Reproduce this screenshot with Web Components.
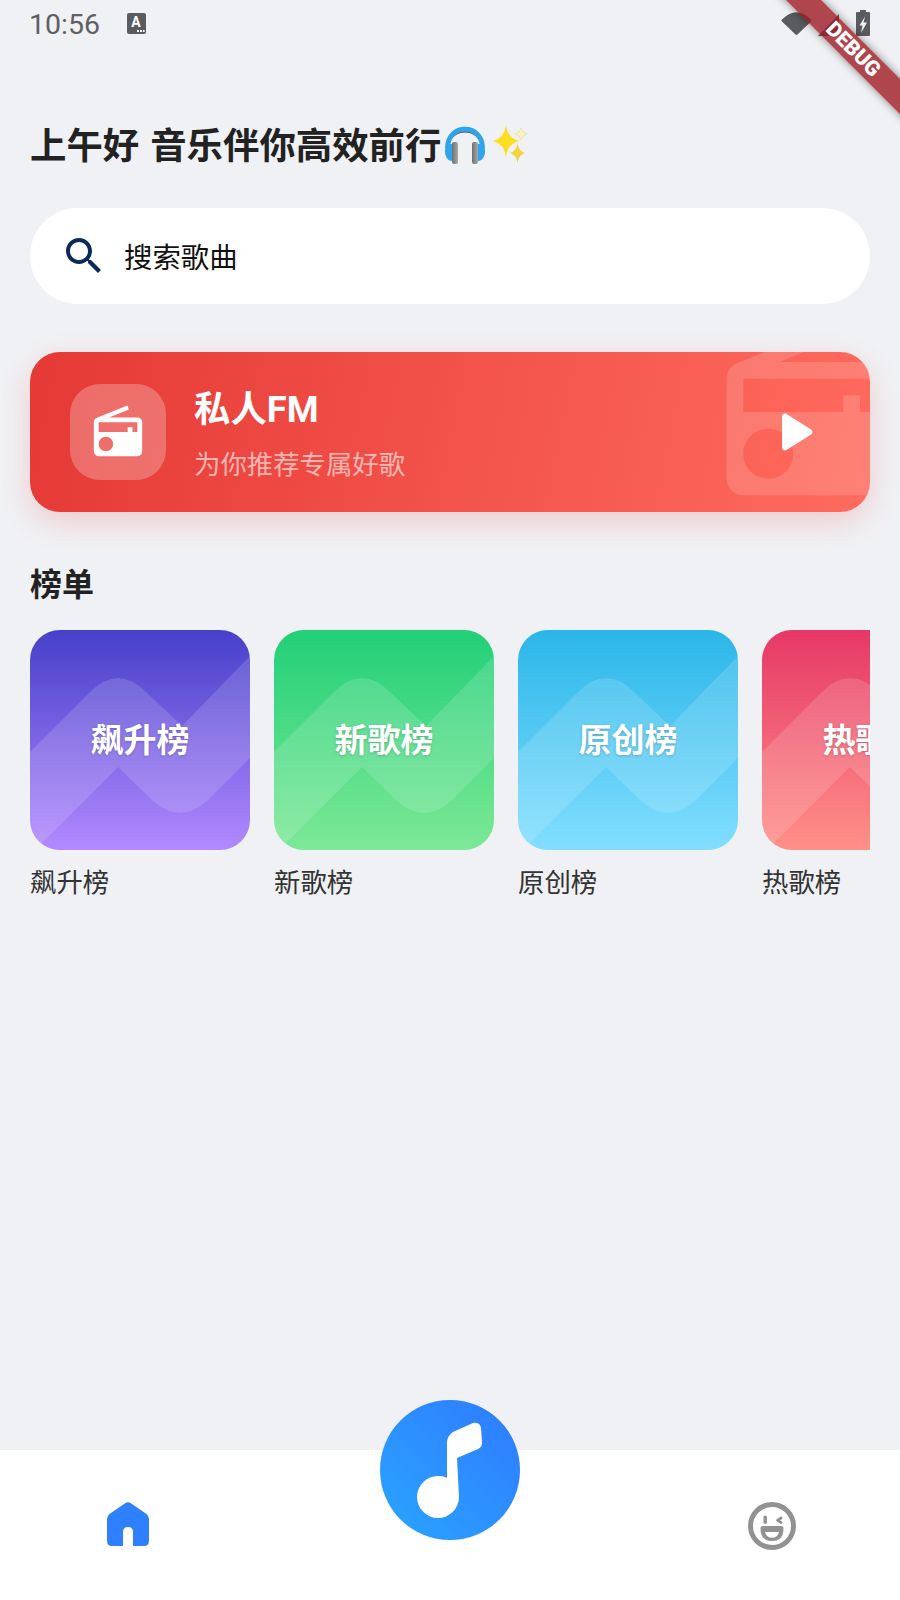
<!DOCTYPE html>
<html lang="zh">
<head>
<meta charset="utf-8">
<title>首页</title>
<style>
  html, body { margin: 0; padding: 0; }
  body {
    width: 900px;
    height: 1600px;
    overflow: hidden;
    background: #f0f1f4;
    font-family: Roboto, "Noto Sans CJK SC", sans-serif;
  }
</style>
</head>
<body>
<home-screen>
  <status-bar></status-bar>
  <greeting-title>上午好 音乐伴你高效前行</greeting-title>
  <search-box>搜索歌曲</search-box>
  <fm-card heading="私人FM" sub="为你推荐专属好歌"></fm-card>
  <section-title>榜单</section-title>
  <chart-row>
    <chart-card name="飙升榜" from="#4640c9" to="#b289ff"></chart-card>
    <chart-card name="新歌榜" from="#22cf78" to="#7de896"></chart-card>
    <chart-card name="原创榜" from="#2bb6e8" to="#82deff"></chart-card>
    <chart-card name="热歌榜" from="#e63866" to="#ff9088"></chart-card>
  </chart-row>
  <bottom-nav></bottom-nav>
</home-screen>
<debug-banner></debug-banner>

<script>
class HomeScreen extends HTMLElement {
  constructor() {
    super();
    this.attachShadow({ mode: "open" });
    this.shadowRoot.innerHTML = `
      <style>
        :host { display: flex; flex-direction: column; width: 900px; height: 1600px; }
      </style>
      <slot></slot>
    `;
  }
}

class StatusBar extends HTMLElement {
  constructor() {
    super();
    this.attachShadow({ mode: "open" });
    this.shadowRoot.innerHTML = `
      <style>
        :host { display: flex; align-items: flex-start; height: 50px; padding: 0 30px; color: #5f6063; }
        .time { font: 400 28.500px/50px Roboto, sans-serif; margin-left: -1px; }
        .kbd { margin: 13px 0 0 27px; }
        .wifi { margin: 12px 0 0 auto; }
        .signal { margin: 14px 0 0 6px; }
        .battery { margin: 10px 0 0 17px; }
        svg { display: block; flex: none; fill: #5a5b5e; }
      </style>
      <span class="time">10:56</span>
      <svg class="kbd" width="19" height="21" viewBox="0 0 19 21">
        <rect width="19" height="21" rx="2"/>
        <text x="9" y="14" text-anchor="middle" fill="#fff" font-family="Roboto, sans-serif" font-weight="700" font-size="14">A</text>
        <rect x="10" y="17" width="2" height="2" fill="#fff"/><rect x="13" y="17" width="2" height="2" fill="#fff"/><rect x="16" y="17" width="1.600" height="2" fill="#fff"/>
      </svg>
      <svg class="wifi" width="31" height="23" viewBox="0 0 31 23">
        <path d="M1 7.500Q15.500 -7 30 7.500Q31 8.500 30 9.500L16.500 22.500Q15.500 23.300 14.500 22.500L1 9.500Q0 8.500 1 7.500Z"/>
      </svg>
      <svg class="signal" width="21" height="22" viewBox="0 0 21 22"><path d="M21 0V22H0Z"/></svg>
      <svg class="battery" width="14" height="26" viewBox="0 0 14 26">
        <path d="M4 0H10V2H13Q14 2 14 3V25Q14 26 13 26H1Q0 26 0 25V3Q0 2 1 2H4Z"/>
        <path d="M9 6.500L3.500 15.500H6.500L5 23L11 12.500H7.500Z" fill="#f0f1f4"/>
      </svg>
    `;
  }
}

class GreetingTitle extends HTMLElement {
  constructor() {
    super();
    this.attachShadow({ mode: "open" });
    this.shadowRoot.innerHTML = `
      <style>
        :host { display: flex; align-items: center; height: 60px; margin: 63px 0 0 30px;
                font-size: 36.400px; font-weight: 700; color: #222; word-spacing: 2px; }
        svg { display: block; flex: none; margin-top: 2px; }
        .phones { margin-left: 3px; }
        .stars { margin-left: 7px; }
      </style>
      <slot></slot>
      <svg class="phones" width="42" height="40" viewBox="0 0 42 40">
        <defs>
          <linearGradient id="cup" x1="0" x2="1" y1="0" y2="0"><stop offset="0" stop-color="#6f6f6f"/><stop offset="1" stop-color="#a9a9a9"/></linearGradient>
        </defs>
        <path d="M4 24C4 2 38 2 38 24" fill="none" stroke="#3a4450" stroke-width="2"/>
        <path d="M3.500 24C3.500 -1 38.500 -1 38.500 24" fill="none" stroke="#2fa4ec" stroke-width="5"/>
        <path d="M1 27C1 22 4 20 8 20V37C4 37 1 33 1 27Z" fill="#2ea3ee"/>
        <path d="M41 27C41 22 38 20 34 20V37C38 37 41 33 41 27Z" fill="#2ea3ee"/>
        <rect x="8" y="18" width="6" height="22" rx="2" fill="url(#cup)"/>
        <rect x="28" y="18" width="6" height="22" rx="2" fill="url(#cup)"/>
      </svg>
      <svg class="stars" width="35" height="39" viewBox="0 0 35 39">
        <path d="M13 0Q14.500 13 26 16Q14.500 19 13 32Q11.500 19 0 16Q11.500 13 13 0Z" fill="#fbdf20"/>
        <path d="M28 3Q29 8 34 9Q29 10 28 15Q27 10 22 9Q27 8 28 3Z" fill="#fdf2b8" stroke="#ead98a" stroke-width=".6"/>
        <path d="M24.500 18Q25.500 26 32 28Q25.500 30 24.500 38Q23.500 30 17 28Q23.500 26 24.500 18Z" fill="#f5d33c"/>
      </svg>
    `;
  }
}

class SearchBox extends HTMLElement {
  constructor() {
    super();
    this.attachShadow({ mode: "open" });
    this.shadowRoot.innerHTML = `
      <style>
        :host { display: flex; align-items: center; gap: 16px; width: 810px; height: 96px;
                margin: 35px 30px 0; padding-left: 30px; background: #fff; border-radius: 48px;
                font-size: 28.400px; color: #111; }
        svg { display: block; flex: none; fill: #0b2a5b; }
        .hint { margin-bottom: 2px; }
      </style>
      <svg width="48" height="48" viewBox="0 0 24 24">
        <path d="M15.500 14h-.79l-.28-.27C15.410 12.590 16 11.110 16 9.500 16 5.910 13.090 3 9.500 3S3 5.910 3 9.500 5.910 16 9.500 16c1.610 0 3.090-.59 4.230-1.570l.27.28v.79l5 4.990L20.490 19l-4.990-5zm-6 0C7.010 14 5 11.990 5 9.500S7.010 5 9.500 5 14 7.010 14 9.500 11.990 14 9.500 14z"/>
      </svg>
      <span class="hint"><slot></slot></span>
    `;
  }
}

const RADIO_PATH = "M3.240 6.150C2.510 6.430 2 7.170 2 8v12c0 1.100.89 2 2 2h16c1.110 0 2-.9 2-2V8c0-1.110-.89-2-2-2H8.300l8.260-3.340L15.880 1 3.240 6.150zM7 20c-1.660 0-3-1.340-3-3s1.340-3 3-3 3 1.340 3 3-1.340 3-3 3zm13-8h-2v-2h-2v2H4V8h16v4z";

class FmCard extends HTMLElement {
  constructor() {
    super();
    this.attachShadow({ mode: "open" });
  }

  connectedCallback() {
    this.shadowRoot.innerHTML = `
      <style>
        :host { display: block; width: 840px; height: 160px; margin: 48px 30px 0; position: relative;
                border-radius: 30px; box-shadow: 0 10px 30px rgba(229, 57, 53, .2); }
        .inner { display: flex; align-items: center; height: 100%; padding-left: 40px; box-sizing: border-box;
                 position: relative; overflow: hidden; border-radius: 30px;
                 background: linear-gradient(101deg, #e53935 0%, #ff6b5e 100%); }
        .tile { display: flex; align-items: center; justify-content: center; flex: none;
                width: 96px; height: 96px; border-radius: 30px; background: rgba(255, 255, 255, .25); }
        .tile svg { fill: #fff; display: block; }
        .text { margin-left: 28px; padding-top: 3px; color: #fff; }
        .heading { font-size: 36.400px; font-weight: 700; line-height: 52px; }
        .sub { font-size: 26.400px; line-height: 38px; margin-top: 10px; color: rgba(255, 255, 255, .6); }
        .ghost { position: absolute; right: -40px; top: -40px; fill: #fff; opacity: .15; }
        .play { position: absolute; right: 40px; top: 44px; fill: #fff; }
      </style>
      <div class="inner">
        <div class="tile">
          <svg width="58" height="58" viewBox="0 0 24 24"><path d="${RADIO_PATH}"/></svg>
        </div>
        <div class="text">
          <div class="heading">${this.getAttribute("heading")}</div>
          <div class="sub">${this.getAttribute("sub")}</div>
        </div>
        <svg class="ghost" width="200" height="200" viewBox="0 0 24 24"><path d="${RADIO_PATH}"/></svg>
        <svg class="play" width="72" height="72" viewBox="0 0 24 24">
          <path d="M8 6.820v10.360c0 .79.87 1.270 1.540.84l8.140-5.180c.62-.39.62-1.290 0-1.690L9.540 5.980C8.870 5.550 8 6.030 8 6.820z"/>
        </svg>
      </div>
    `;
  }
}

class SectionTitle extends HTMLElement {
  constructor() {
    super();
    this.attachShadow({ mode: "open" });
    this.shadowRoot.innerHTML = `
      <style>
        :host { display: block; margin: 53px 30px 0; font-size: 32px; font-weight: 700;
                line-height: 40px; height: 39px; color: #222; }
      </style>
      <slot></slot>
    `;
  }
}

class ChartRow extends HTMLElement {
  constructor() {
    super();
    this.attachShadow({ mode: "open" });
    this.shadowRoot.innerHTML = `
      <style>
        :host { display: flex; gap: 24px; width: 840px; margin: 26px 30px 0; overflow: hidden; flex: 1; align-items: flex-start; }
      </style>
      <slot></slot>
    `;
  }
}

class ChartCard extends HTMLElement {
  constructor() {
    super();
    this.attachShadow({ mode: "open" });
  }

  connectedCallback() {
    const name = this.getAttribute("name");
    this.shadowRoot.innerHTML = `
      <style>
        :host { display: block; flex: none; width: 220px; }
        .cover { display: flex; align-items: center; justify-content: center; position: relative;
                 width: 220px; height: 220px; border-radius: 30px; overflow: hidden;
                 background: linear-gradient(180deg, ${this.getAttribute("from")}, ${this.getAttribute("to")}); }
        .wave { position: absolute; left: 0; top: 0; fill: #fff; fill-opacity: .14; }
        .title { position: relative; font-size: 33px; font-weight: 700; color: #fff; line-height: 44px; margin-top: 2px;
                 text-shadow: 0 1px 3px rgba(0, 0, 0, .2); white-space: nowrap; }
        .label { margin-top: 15px; font-size: 26.400px; line-height: 36px; color: #333; }
      </style>
      <div class="cover">
        <svg class="wave" width="220" height="220" viewBox="0 0 220 220">
          <path d="M0 122L60 62Q88 34 116 62L152 96L220 26V128L178 170Q150 196 122 170L88 137L5 220H0Z"/>
        </svg>
        <span class="title">${name}</span>
      </div>
      <div class="label">${name}</div>
    `;
  }
}

class BottomNav extends HTMLElement {
  constructor() {
    super();
    this.attachShadow({ mode: "open" });
    this.shadowRoot.innerHTML = `
      <style>
        :host { display: flex; justify-content: space-between; align-items: flex-start; position: relative;
                box-sizing: border-box; height: 150px; background: #fff; padding: 52px 104px 0 107px; flex: none; }
        svg { display: block; flex: none; }
        .fab { position: absolute; left: 380px; top: -50px; width: 140px; height: 140px; border-radius: 50%;
               display: flex; align-items: center; justify-content: center;
               background: linear-gradient(45deg, #2aa5ff, #2f7aff); }
      </style>
      <svg width="42" height="44" viewBox="0 0 42 44" fill="#2f80ff">
        <path d="M18.500 1Q21 -.5 23.500 1L39.500 12Q42 14 42 17V39Q42 44 37 44H26V30Q26 25 21 25Q16 25 16 30V44H5Q0 44 0 39V17Q0 14 2.500 12Z"/>
      </svg>
      <div class="fab">
        <svg width="140" height="140" viewBox="380 1400 140 140" fill="#fff">
          <path d="M447 1478C443 1476 441 1476 438 1476A21 21 0 1 0 459 1497L457 1458L478 1449Q482 1447 482 1443L481 1428Q480 1422 473 1423L453 1432Q447 1436 447 1443Z"/>
        </svg>
      </div>
      <svg width="48" height="48" viewBox="0 0 48 48">
        <circle cx="24" cy="24" r="21.500" fill="none" stroke="#929292" stroke-width="5"/>
        <rect x="15.500" y="13.500" width="3.400" height="8.500" rx="1.700" fill="#929292"/>
        <path d="M33 16L29.500 18.300L33 20.600" fill="none" stroke="#929292" stroke-width="2.800" stroke-linecap="round" stroke-linejoin="round"/>
        <path d="M15 24H33Q35.500 24 35.500 26.500Q35.500 39 24 39Q12.500 39 12.500 26.500Q12.500 24 15 24Z" fill="#929292"/>
        <path d="M17 30H31Q29.500 35.800 24 35.800Q18.500 35.800 17 30Z" fill="#fff"/>
      </svg>
    `;
  }
}

class DebugBanner extends HTMLElement {
  constructor() {
    super();
    this.attachShadow({ mode: "open" });
    this.shadowRoot.innerHTML = `
      <style>
        :host { display: block; position: absolute; left: 0; top: 0; width: 900px; height: 200px;
                overflow: hidden; pointer-events: none; }
        .band { position: absolute; left: 703px; top: 37px; width: 300px; height: 25px;
                transform: rotate(45deg); background: rgba(160, 28, 35, .8);
                box-shadow: 0 0 8px rgba(0, 0, 0, .45); text-align: center;
                font: 900 21px/25px Roboto, sans-serif; color: #fff; }
      </style>
      <div class="band">DEBUG</div>
    `;
  }
}

customElements.define("home-screen", HomeScreen);
customElements.define("status-bar", StatusBar);
customElements.define("greeting-title", GreetingTitle);
customElements.define("search-box", SearchBox);
customElements.define("fm-card", FmCard);
customElements.define("section-title", SectionTitle);
customElements.define("chart-row", ChartRow);
customElements.define("chart-card", ChartCard);
customElements.define("bottom-nav", BottomNav);
customElements.define("debug-banner", DebugBanner);
</script>
</body>
</html>
